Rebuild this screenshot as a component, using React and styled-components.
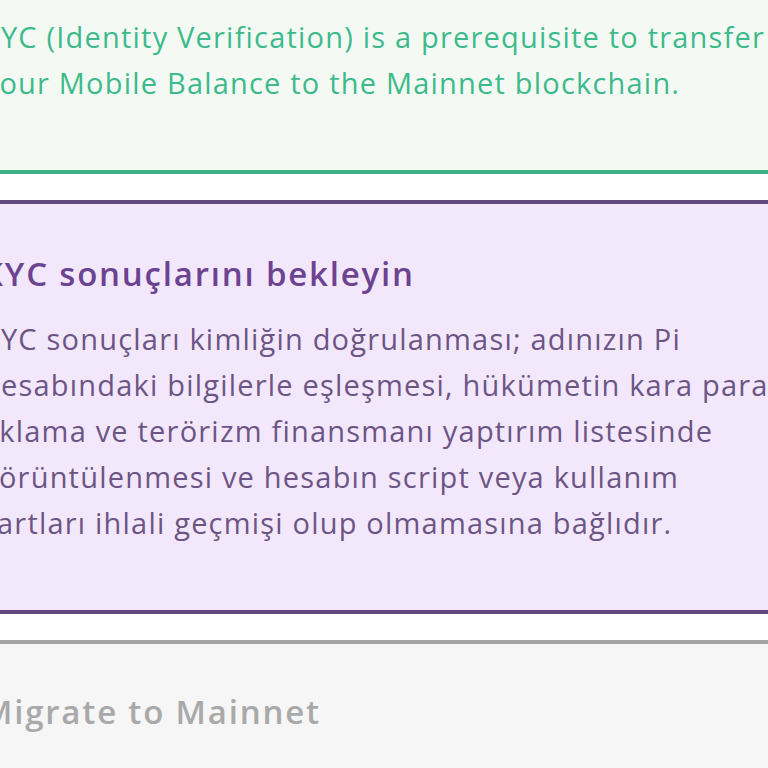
import React from 'react';
import styled, { createGlobalStyle } from 'styled-components';

const GlobalStyle = createGlobalStyle`
  html, body {
    margin: 0;
    padding: 0;
    background: #ffffff;
    overflow: hidden;
  }
  body {
    font-family: 'Open Sans', 'Noto Sans', sans-serif;
  }
`;

const Screen = styled.div`
  width: 900px;
  margin-left: -18px;
  display: flex;
  flex-direction: column;
  gap: 26px;
`;

const Panel = styled.section`
  background: ${(p) => p.bg};
  border-top: ${(p) => (p.top ? `4px solid ${p.line}` : 'none')};
  border-bottom: ${(p) => (p.bottom ? `4px solid ${p.line}` : 'none')};
  padding: ${(p) => p.pad};
`;

const Text = styled.p`
  margin: 0;
  font-size: 29px;
  line-height: 46px;
  letter-spacing: 1.2px;
  color: ${(p) => p.color};
  font-weight: 400;
  white-space: nowrap;
`;

const Heading = styled.h2`
  margin: 0 0 20px 0;
  font-size: 33px;
  line-height: 44px;
  letter-spacing: 1.8px;
  font-weight: 600;
  color: ${(p) => p.color};
  white-space: nowrap;
`;

const App = () => (
  <>
    <GlobalStyle />
    <Screen>
      <Panel bg="#f4faf3" line="#3dae85" bottom pad="14px 0 64px 0">
        <Text color="#3dba8b">
          KYC (Identity Verification) is a prerequisite to transfer
          <br />
          Your Mobile Balance to the Mainnet blockchain.
        </Text>
      </Panel>
      <Panel bg="#f3e8fb" line="#62487c" top bottom pad="48px 0 64px 0">
        <Heading color="#6c4390">KYC sonuçlarını bekleyin</Heading>
        <Text color="#6c5585">
          KYC sonuçları kimliğin doğrulanması; adınızın Pi
          <br />
          hesabındaki bilgilerle eşleşmesi, hükümetin kara para
          <br />
          aklama ve terörizm finansmanı yaptırım listesinde
          <br />
          görüntülenmesi ve hesabın script veya kullanım
          <br />
          şartları ihlali geçmişi olup olmamasına bağlıdır.
        </Text>
      </Panel>
      <Panel bg="#f6f6f6" line="#a4a4a4" top pad="46px 0 60px 0">
        <Heading color="#a9a9a9">Migrate to Mainnet</Heading>
      </Panel>
    </Screen>
  </>
);

export default App;
